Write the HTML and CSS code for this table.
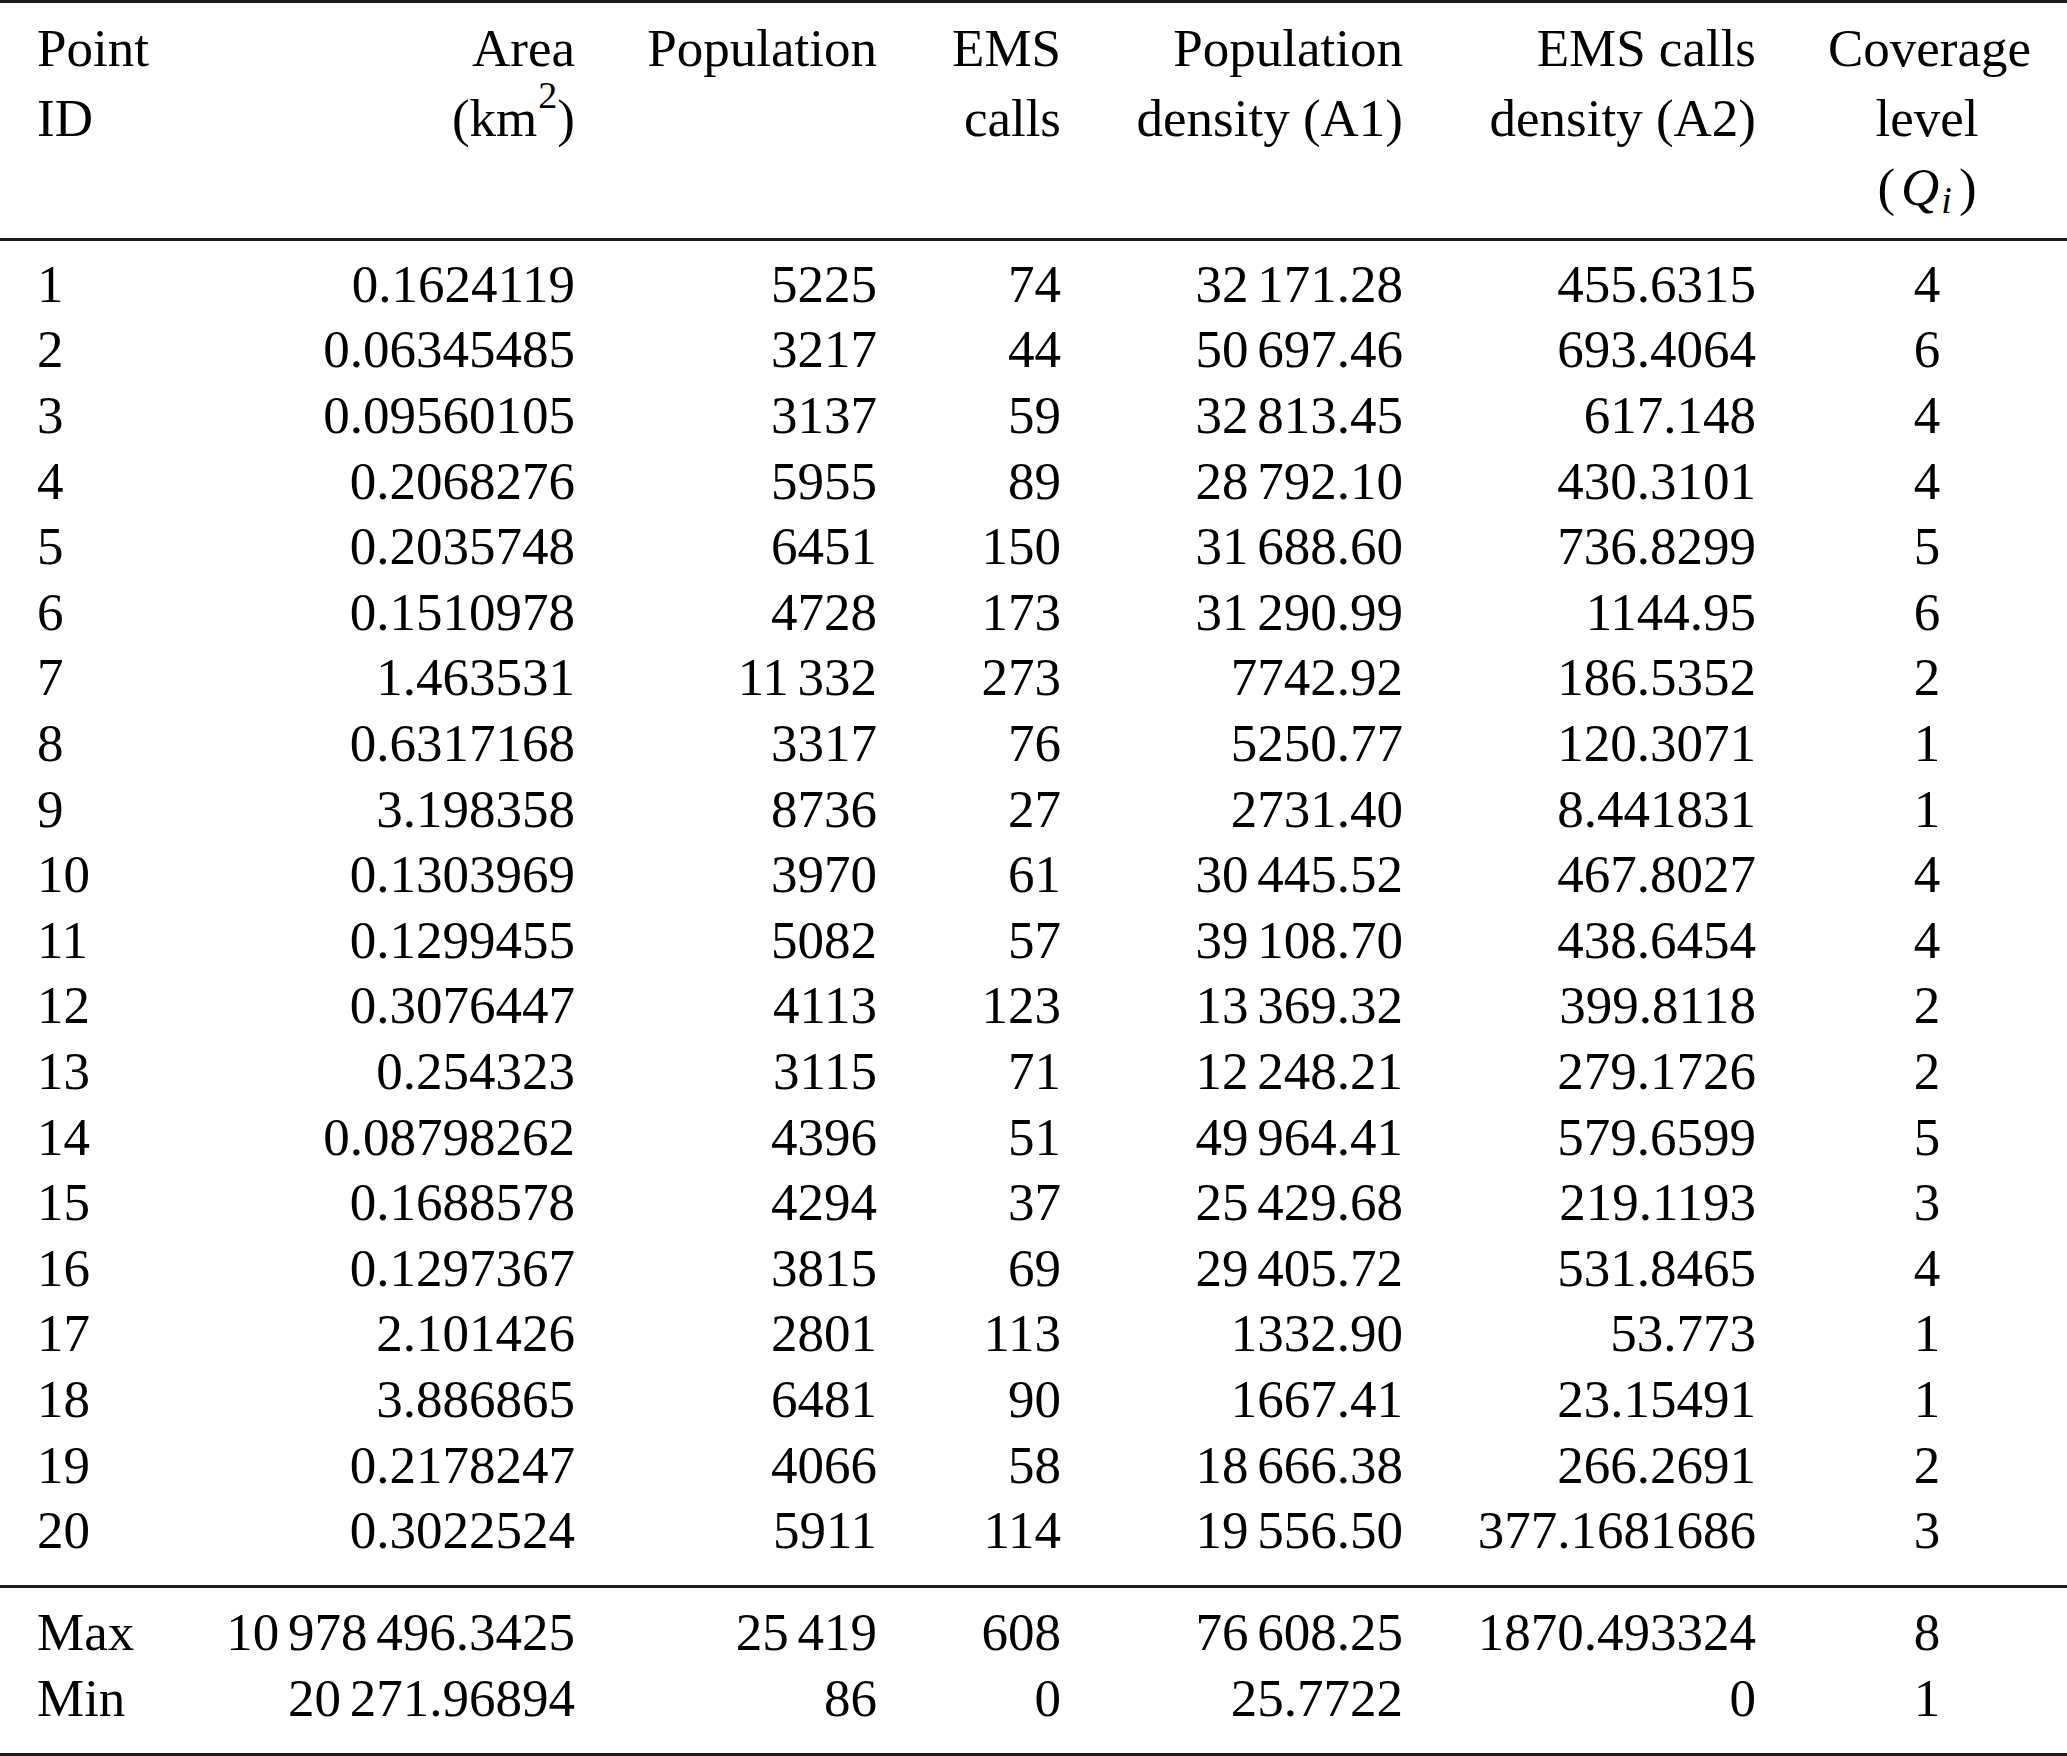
FILE: index.html
```html
<!DOCTYPE html>
<html lang="en">
<head>
<meta charset="utf-8">
<title>Point statistics</title>
<link rel="stylesheet" href="styles.css">
</head>
<body>
<table class="tbl">
  <colgroup>
    <col class="w1"><col class="w2"><col class="w3"><col class="w4"><col class="w5"><col class="w6"><col class="w7">
  </colgroup>
  <thead>
    <tr>
      <th class="l">Point<br>ID</th>
      <th class="r">Area<br>(km<sup class="sup">2</sup>)</th>
      <th class="r">Population</th>
      <th class="r">EMS<br>calls</th>
      <th class="r">Population<br>density (A1)</th>
      <th class="r">EMS calls<br>density (A2)</th>
      <th class="c">Coverage<br>level<br><span class="math">(<i class="q">Q</i><sub class="sub">i</sub>)</span></th>
    </tr>
  </thead>
  <tbody>
    <tr><td class="l">1</td><td class="r">0.1624119</td><td class="r">5225</td><td class="r">74</td><td class="r">32 171.28</td><td class="r">455.6315</td><td class="c">4</td></tr>
    <tr><td class="l">2</td><td class="r">0.06345485</td><td class="r">3217</td><td class="r">44</td><td class="r">50 697.46</td><td class="r">693.4064</td><td class="c">6</td></tr>
    <tr><td class="l">3</td><td class="r">0.09560105</td><td class="r">3137</td><td class="r">59</td><td class="r">32 813.45</td><td class="r">617.148</td><td class="c">4</td></tr>
    <tr><td class="l">4</td><td class="r">0.2068276</td><td class="r">5955</td><td class="r">89</td><td class="r">28 792.10</td><td class="r">430.3101</td><td class="c">4</td></tr>
    <tr><td class="l">5</td><td class="r">0.2035748</td><td class="r">6451</td><td class="r">150</td><td class="r">31 688.60</td><td class="r">736.8299</td><td class="c">5</td></tr>
    <tr><td class="l">6</td><td class="r">0.1510978</td><td class="r">4728</td><td class="r">173</td><td class="r">31 290.99</td><td class="r">1144.95</td><td class="c">6</td></tr>
    <tr><td class="l">7</td><td class="r">1.463531</td><td class="r">11 332</td><td class="r">273</td><td class="r">7742.92</td><td class="r">186.5352</td><td class="c">2</td></tr>
    <tr><td class="l">8</td><td class="r">0.6317168</td><td class="r">3317</td><td class="r">76</td><td class="r">5250.77</td><td class="r">120.3071</td><td class="c">1</td></tr>
    <tr><td class="l">9</td><td class="r">3.198358</td><td class="r">8736</td><td class="r">27</td><td class="r">2731.40</td><td class="r">8.441831</td><td class="c">1</td></tr>
    <tr><td class="l">10</td><td class="r">0.1303969</td><td class="r">3970</td><td class="r">61</td><td class="r">30 445.52</td><td class="r">467.8027</td><td class="c">4</td></tr>
    <tr><td class="l">11</td><td class="r">0.1299455</td><td class="r">5082</td><td class="r">57</td><td class="r">39 108.70</td><td class="r">438.6454</td><td class="c">4</td></tr>
    <tr><td class="l">12</td><td class="r">0.3076447</td><td class="r">4113</td><td class="r">123</td><td class="r">13 369.32</td><td class="r">399.8118</td><td class="c">2</td></tr>
    <tr><td class="l">13</td><td class="r">0.254323</td><td class="r">3115</td><td class="r">71</td><td class="r">12 248.21</td><td class="r">279.1726</td><td class="c">2</td></tr>
    <tr><td class="l">14</td><td class="r">0.08798262</td><td class="r">4396</td><td class="r">51</td><td class="r">49 964.41</td><td class="r">579.6599</td><td class="c">5</td></tr>
    <tr><td class="l">15</td><td class="r">0.1688578</td><td class="r">4294</td><td class="r">37</td><td class="r">25 429.68</td><td class="r">219.1193</td><td class="c">3</td></tr>
    <tr><td class="l">16</td><td class="r">0.1297367</td><td class="r">3815</td><td class="r">69</td><td class="r">29 405.72</td><td class="r">531.8465</td><td class="c">4</td></tr>
    <tr><td class="l">17</td><td class="r">2.101426</td><td class="r">2801</td><td class="r">113</td><td class="r">1332.90</td><td class="r">53.773</td><td class="c">1</td></tr>
    <tr><td class="l">18</td><td class="r">3.886865</td><td class="r">6481</td><td class="r">90</td><td class="r">1667.41</td><td class="r">23.15491</td><td class="c">1</td></tr>
    <tr><td class="l">19</td><td class="r">0.2178247</td><td class="r">4066</td><td class="r">58</td><td class="r">18 666.38</td><td class="r">266.2691</td><td class="c">2</td></tr>
    <tr><td class="l">20</td><td class="r">0.3022524</td><td class="r">5911</td><td class="r">114</td><td class="r">19 556.50</td><td class="r">377.1681686</td><td class="c">3</td></tr>
  </tbody>
  <tfoot>
    <tr><td class="l">Max</td><td class="r">10 978 496.3425</td><td class="r">25 419</td><td class="r">608</td><td class="r">76 608.25</td><td class="r">1870.493324</td><td class="c">8</td></tr>
    <tr><td class="l">Min</td><td class="r">20 271.96894</td><td class="r">86</td><td class="r">0</td><td class="r">25.7722</td><td class="r">0</td><td class="c">1</td></tr>
  </tfoot>
</table>
</body>
</html>
```

FILE: styles.css
```css
html, body {
  margin: 0;
  padding: 0;
  background: #ffffff;
}

.tbl {
  border-collapse: separate;
  border-spacing: 0;
  table-layout: fixed;
  width: 2067px;
  font-family: "Liberation Serif", "Times New Roman", serif;
  font-size: 53px;
  color: #000000;
}

.w1 { width: 185px; }
.w2 { width: 426px; }
.w3 { width: 302px; }
.w4 { width: 184px; }
.w5 { width: 342px; }
.w6 { width: 353px; }
.w7 { width: 275px; }

.tbl th,
.tbl td {
  padding: 0 36px;
  white-space: nowrap;
  font-weight: normal;
}

.tbl th:first-child,
.tbl td:first-child {
  padding-left: 37px;
}

.tbl th:last-child,
.tbl td:last-child {
  padding-right: 41px;
}

.l { text-align: left; }
.r { text-align: right; }
.c { text-align: center; }

/* header block */
.tbl thead th {
  line-height: 69.5px;
  vertical-align: top;
  padding-top: 11px;
  padding-bottom: 15px;
  border-top: 3px solid #1c1c1c;
  border-bottom: 3px solid #1c1c1c;
}

.sup {
  font-size: 38px;
  line-height: 0;
  vertical-align: 28px;
  padding-left: 1px;
}

.math {
  white-space: nowrap;
}

.q {
  font-style: italic;
  padding: 0 2px 0 6px;
}

.sub {
  font-size: 38px;
  font-style: italic;
  line-height: 0;
  vertical-align: -8px;
  padding-right: 7px;
}

/* body rows */
.tbl tbody td,
.tbl tfoot td {
  line-height: 65.6px;
  word-spacing: -0.084em;
}

.tbl tbody tr:first-child td {
  padding-top: 11.4px;
}

.tbl tbody tr:last-child td {
  padding-bottom: 21.7px;
}

/* summary rows */
.tbl tfoot tr:first-child td {
  padding-top: 11.6px;
  border-top: 3px solid #1c1c1c;
}

.tbl tfoot tr:last-child td {
  padding-bottom: 21.5px;
  border-bottom: 3px solid #1c1c1c;
}
```
